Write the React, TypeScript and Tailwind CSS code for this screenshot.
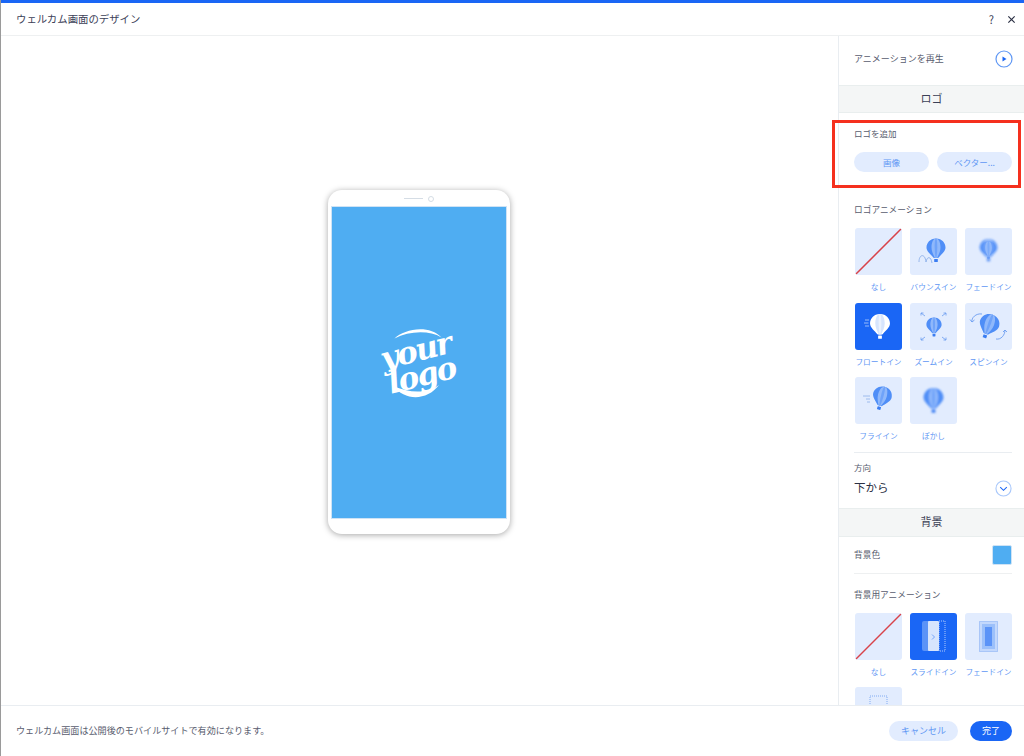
import type { ReactNode } from "react";

const font = "[font-family:'Noto_Sans_CJK_JP','Noto_Sans',sans-serif]";

// shared hot air balloon, drawn around (0,0) with the envelope on top
function Balloon({ body = "#4f8ef7", light = "#8fb8fb", basket = "#3a7df2", blur }: {
  body?: string; light?: string; basket?: string; blur?: boolean;
}) {
  return (
    <g filter={blur ? "url(#soft)" : undefined}>
      <path d="M0-10.500C-6-10.500-9.500-6-9.500-1.500C-9.500 2.500-5 5.500-2.200 9H2.200C5 5.500 9.500 2.500 9.500-1.500C9.500-6 6-10.500 0-10.500Z" fill={body} />
      <path d="M0-10.500C-3-10.500-4.500-6-4.500-1.500C-4.500 2.500-2.500 6-1.200 9H1.200C2.500 6 4.500 2.500 4.500-1.500C4.500-6 3-10.500 0-10.500Z" fill={light} />
      <path d="M0-10.500C-1-10.500-1.300-6-1.300-1.500C-1.300 2.500-0.800 6-0.400 9H0.400C0.800 6 1.300 2.500 1.300-1.500C1.300-6 1-10.500 0-10.500Z" fill={body} opacity="0.5" />
      <rect x="-1.800" y="10" width="3.600" height="3" rx="0.500" fill={basket} />
    </g>
  );
}

function Icon({ children }: { children: ReactNode }) {
  return (
    <svg viewBox="0 0 47 47" className="h-full w-full">
      <defs>
        <filter id="soft" x="-30%" y="-30%" width="160%" height="160%">
          <feGaussianBlur stdDeviation="1.100" />
        </filter>
      </defs>
      {children}
    </svg>
  );
}

const NoneIcon = () => (
  <Icon>
    <line x1="1" y1="46" x2="46" y2="1" stroke="#d8434a" strokeWidth="1.500" />
  </Icon>
);

const BounceIcon = () => (
  <Icon>
    <g transform="translate(26,21)"><Balloon /></g>
    <path d="M9 34C9 26 15 25 16 34C17 28 21 28 22 35" fill="none" stroke="#8db0ea" strokeWidth="0.900" />
  </Icon>
);

const FadeIcon = () => (
  <Icon>
    <g transform="translate(23.500,21) scale(0.95)" opacity="0.85"><Balloon blur /></g>
    <g transform="translate(23.500,21) scale(0.75)" opacity="0.5"><Balloon /></g>
  </Icon>
);

const FloatIcon = () => (
  <Icon>
    <g transform="translate(25,22) scale(1.050)"><Balloon body="#ffffff" light="#d7e5fd" basket="#ffffff" /></g>
    <path d="M10 17H14M9 20H13.500M10 23H14" stroke="#b9d2fb" strokeWidth="0.800" />
  </Icon>
);

const ZoomIcon = () => (
  <Icon>
    <g transform="translate(24,23) scale(0.8)"><Balloon /></g>
    <path d="M11 10L15 13M11 10H13.500M11 10V12.500M36 10L32 13M36 10H33.500M36 10V12.500M11 37L15 34M11 37H13.500M11 37V34.500M36 37L32 34M36 37H33.500M36 37V34.500" fill="none" stroke="#6a9cf0" strokeWidth="0.800" />
  </Icon>
);

const SpinIcon = () => (
  <Icon>
    <g transform="translate(24,22) rotate(20) scale(1.050)"><Balloon /></g>
    <path d="M7 19C6 15 11 10 17 11M7 19L5 16.500M7 19L9.500 17M31 36C36 37 40 32 40 27M40 27L38 29M40 27L42 29" fill="none" stroke="#6a9cf0" strokeWidth="0.900" />
  </Icon>
);

const FlyIcon = () => (
  <Icon>
    <g transform="translate(27,20) rotate(15)"><Balloon /></g>
    <path d="M8 19H15M11 22H15M12 25H15" stroke="#8db0ea" strokeWidth="0.800" />
  </Icon>
);

const BlurIcon = () => (
  <Icon>
    <g transform="translate(23.500,22) scale(1.050)"><Balloon blur /></g>
  </Icon>
);

const SlideIcon = () => (
  <Icon>
    <rect x="12" y="8" width="12" height="30" rx="2" fill="#5b93f7" />
    <rect x="18" y="8" width="11" height="30" rx="1" fill="#d7e5fd" />
    <rect x="29" y="8" width="6" height="30" fill="none" stroke="#d7e5fd" strokeWidth="0.800" strokeDasharray="1 1" />
    <path d="M22 21.500L24.500 24L22 26.500" fill="none" stroke="#5b93f7" strokeWidth="0.800" />
  </Icon>
);

const FadeRectIcon = () => (
  <Icon>
    <rect x="14.500" y="8.500" width="18" height="30" fill="#c3d8fc" stroke="#6a9cf0" strokeWidth="0.800" strokeDasharray="1 1" />
    <rect x="17" y="11" width="13" height="25" fill="#9cc0fa" />
    <rect x="20" y="14" width="7" height="19" fill="#5b93f7" />
  </Icon>
);

const RectDashIcon = () => (
  <Icon>
    <rect x="15" y="9" width="17" height="29" fill="none" stroke="#6a9cf0" strokeWidth="0.800" strokeDasharray="1 1" />
  </Icon>
);

function Tile({ label, icon, active }: { label: string; icon?: ReactNode; active?: boolean }) {
  return (
    <div className="flex w-[47px] flex-col items-center">
      <div className={`h-[47px] w-[47px] overflow-hidden rounded-[3px] ${active ? "bg-[#1a66f5]" : "bg-[#e2ecfe]"}`}>{icon}</div>
      <span className="mt-[4px] h-[17px] whitespace-nowrap text-[7.700px] leading-[16px] text-[#5f97f4]">{label}</span>
    </div>
  );
}

function LogoMark() {
  return (
    <div className="relative flex h-[76px] w-[80px] flex-col items-center justify-center">
      <svg viewBox="0 0 80 76" className="absolute inset-0 h-full w-full">
        <path d="M15.500 13.500C25 4 50-1 62.500 12.500C50 5 30 6 15.500 13.500Z" fill="#fff" />
        <path d="M14 61C26 76 48 76 60 60C48 69 30 68 14 61Z" fill="#fff" />
      </svg>
      <div className="relative -rotate-[14deg] text-center font-['DejaVu_Serif',serif] text-[31px] leading-[25px] font-bold italic tracking-[-1.500px] text-white">
        your<br />logo
      </div>
    </div>
  );
}

export default function App() {
  return (
    <div className={`${font} relative flex h-[756px] w-[1024px] flex-col overflow-hidden border-l border-[#9a9a9a] bg-white`}>
      <div className="h-[3px] shrink-0 bg-[#1a66f5]" />

      <header className="flex h-[33px] shrink-0 items-center justify-between border-b border-[#eef0f1] pr-[8px] pl-[15px]">
        <span className="text-[10.400px] text-[#3b4057]">ウェルカム画面のデザイン</span>
        <div className="flex items-center gap-[13px] text-[#3b4057]">
          <span className="text-[11px]">?</span>
          <svg viewBox="0 0 10 10" className="h-[9px] w-[9px]">
            <path d="M1.500 1.500L8.500 8.500M8.500 1.500L1.500 8.500" stroke="#2b3044" strokeWidth="1.300" />
          </svg>
        </div>
      </header>

      <div className="flex min-h-0 flex-1">
        <main className="flex w-[837px] shrink-0 items-start justify-center pt-[154px] pr-[2px]">
          <div className="flex h-[344px] w-[182px] flex-col rounded-[14px] bg-white shadow-[0_1px_6px_rgba(0,0,0,0.35)]">
            <div className="flex h-[16px] items-center justify-center gap-[5px] pt-px">
              <span className="h-px w-[19px] bg-[#d5dde5]" />
              <span className="h-[6px] w-[6px] rounded-full border border-[#d5dde5]" />
            </div>
            <div className="mx-[3px] flex h-[313px] items-center justify-center border border-[#cfe3f5] bg-[#4fadf2]">
              <LogoMark />
            </div>
          </div>
        </main>

        <aside className="min-w-0 flex-1 overflow-hidden border-l border-[#e9edf1] text-[#585c6e]">
          <div className="flex h-[49px] items-center justify-between pr-[11px] pb-[3px] pl-[15px]">
            <span className="text-[9px]">アニメーションを再生</span>
            <svg viewBox="0 0 18 18" className="h-[18px] w-[18px]">
              <circle cx="9" cy="9" r="8" fill="none" stroke="#5f97f4" strokeWidth="1.200" />
              <path d="M7.500 6.500L11.500 9L7.500 11.500Z" fill="#1a66f5" />
            </svg>
          </div>
          <div className="h-[28px] border-y border-[#e9eeee] bg-[#f4f6f6] text-center text-[11px] leading-[24px] text-[#3b4057]">ロゴ</div>

          <div className="pt-[13px] pr-[12px] pl-[15px]">
            <div className="text-[8.500px] leading-[14px]">ロゴを追加</div>
            <div className="mt-[12px] flex gap-[8px]">
              <button className="h-[20px] w-[75px] rounded-full bg-[#e2ecfe] text-[8.500px] text-[#5f97f4]">画像</button>
              <button className="h-[20px] w-[75px] rounded-full bg-[#e2ecfe] text-[8.500px] text-[#5f97f4]">ベクター...</button>
            </div>

            <div className="mt-[31px] text-[8.700px] leading-[14px]">ロゴアニメーション</div>
            <div className="mt-[11px] ml-px grid grid-cols-[47px_47px_47px] gap-x-[8px] gap-y-[6.500px]">
              <Tile label="なし" icon={<NoneIcon />} />
              <Tile label="バウンスイン" icon={<BounceIcon />} />
              <Tile label="フェードイン" icon={<FadeIcon />} />
              <Tile label="フロートイン" active icon={<FloatIcon />} />
              <Tile label="ズームイン" icon={<ZoomIcon />} />
              <Tile label="スピンイン" icon={<SpinIcon />} />
              <Tile label="フライイン" icon={<FlyIcon />} />
              <Tile label="ぼかし" icon={<BlurIcon />} />
            </div>

            <div className="mt-[7px] h-px bg-[#e9edf1]" />
            <div className="mt-[7px] text-[8.500px] leading-[14px]">方向</div>
            <div className="mt-[4px] flex h-[20px] items-center justify-between">
              <span className="text-[11.500px] text-[#2b3044]">下から</span>
              <svg viewBox="0 0 18 18" className="h-[17px] w-[17px]">
                <circle cx="9" cy="9" r="8" fill="none" stroke="#a9c8fb" strokeWidth="1.200" />
                <path d="M5.500 7.500L9 11L12.500 7.500" fill="none" stroke="#1a66f5" strokeWidth="1.100" />
              </svg>
            </div>
          </div>

          <div className="mt-[10px] h-[29px] border-y border-[#e9eeee] bg-[#f4f6f6] text-center text-[11px] leading-[25px] text-[#3b4057]">背景</div>

          <div className="pr-[12px] pl-[15px]">
            <div className="flex h-[37px] items-center justify-between border-b border-[#eef0f1]">
              <span className="text-[8.700px]">背景色</span>
              <span className="h-[20px] w-[20px] rounded-[2px] border border-[#cfe3f5] bg-[#4fadf2]" />
            </div>
            <div className="mt-[14px] text-[8.700px] leading-[14px]">背景用アニメーション</div>
            <div className="mt-[11px] ml-px grid grid-cols-[47px_47px_47px] gap-x-[8px] gap-y-[6px]">
              <Tile label="なし" icon={<NoneIcon />} />
              <Tile label="スライドイン" active icon={<SlideIcon />} />
              <Tile label="フェードイン" icon={<FadeRectIcon />} />
              <Tile label="" icon={<RectDashIcon />} />
            </div>
          </div>
        </aside>
      </div>

      <footer className="flex h-[51px] shrink-0 items-center justify-between border-t border-[#e9edf1] pr-[12px] pl-[15px]">
        <span className="text-[9.100px] text-[#585c6e]">ウェルカム画面は公開後のモバイルサイトで有効になります。</span>
        <div className="flex gap-[12px]">
          <button className="h-[20px] w-[69px] rounded-full bg-[#e2ecfe] text-[9px] text-[#5f97f4]">キャンセル</button>
          <button className="h-[20px] w-[42px] rounded-full bg-[#1a66f5] text-[9px] text-white">完了</button>
        </div>
      </footer>

      {/* 注釈の赤枠 */}
      <div className="pointer-events-none absolute top-[120px] left-[831px] h-[68px] w-[189px] border-[3px] border-[#f5301e]" />
    </div>
  );
}
